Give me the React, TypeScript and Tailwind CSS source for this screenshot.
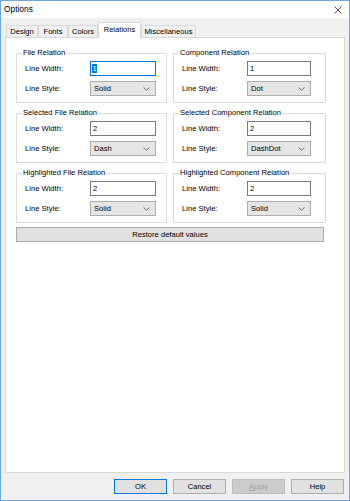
import React from "react";

const font = { fontFamily: '"Liberation Sans", Arial, sans-serif' };

function Chevron() {
  return (
    <svg width="7" height="4" viewBox="0 0 7 4" className="mr-[5px]">
      <path d="M0.5 0.5 L3.5 3.3 L6.5 0.5" fill="none" stroke="#6b6b6b" strokeWidth="0.9" />
    </svg>
  );
}

function Group({
  title,
  width,
  inputW,
  lineWidth,
  style,
  focused,
}: {
  title: string;
  width: string;
  inputW: string;
  lineWidth: string;
  style: string;
  focused?: boolean;
}) {
  return (
    <div className={`relative ${width} h-[50px] border border-[#dcdcdc] pt-[7px] pl-[8px] flex flex-col gap-[5px]`}>
      <div className="absolute -top-[6px] left-[5px] bg-white px-[1px] leading-[10px] text-black">{title}</div>
      <div className="flex items-center h-[15px]">
        <div className="w-[65px] text-black">Line Width:</div>
        <div
          className={`${inputW} h-[15px] border ${
            focused ? "border-[#0078d7]" : "border-[#7a7a7a]"
          } bg-white flex items-center pl-[1px]`}
        >
          {focused ? (
            <span className="bg-[#0078d7] text-white leading-[9px] px-[0.5px]">{lineWidth}</span>
          ) : (
            <span className="text-black pl-[1px]">{lineWidth}</span>
          )}
        </div>
      </div>
      <div className="flex items-center h-[15px]">
        <div className="w-[65px] text-black">Line Style:</div>
        <div className={`${inputW} h-[15px] border border-[#adadad] bg-[#e5e5e5] flex items-center justify-between pl-[3px]`}>
          <span className="text-black">{style}</span>
          <Chevron />
        </div>
      </div>
    </div>
  );
}

export default function App() {
  const tabs = [
    { name: "Design", w: "w-[32px]" },
    { name: "Fonts", w: "w-[30px]" },
    { name: "Colors", w: "w-[30px]" },
    { name: "Relations", w: "w-[43px]", active: true },
    { name: "Miscellaneous", w: "w-[55px]" },
  ];
  return (
    <div
      style={font}
      className="w-[350px] h-[501px] border border-[#6fa6dd] bg-[#f0f0f0] flex flex-col text-[7.6px] leading-none text-black overflow-hidden"
    >
      <div className="h-[17px] bg-white flex items-center justify-between pl-[3px] pr-[7px]">
        <span className="text-[8.4px]">Options</span>
        <svg width="8" height="8" viewBox="0 0 8 8">
          <path d="M0.5 0.5 L7.5 7.5 M7.5 0.5 L0.5 7.5" stroke="#222" strokeWidth="0.8" />
        </svg>
      </div>

      <div className="mt-[4px] pl-[5px] flex items-end h-[15px] relative z-10">
        {tabs.map((t) =>
          t.active ? (
            <div
              key={t.name}
              className={`${t.w} h-[16px] -mb-px bg-white border-t border-l border-r border-[#d9d9d9] flex items-center justify-center pb-[2px]`}
            >
              {t.name}
            </div>
          ) : (
            <div
              key={t.name}
              className={`${t.w} h-[12px] bg-[#f0f0f0] border-t border-l border-r border-[#d9d9d9] flex items-center justify-center`}
            >
              {t.name}
            </div>
          )
        )}
      </div>

      <div className="mx-[4px] h-[436px] bg-white border border-[#d9d9d9] pl-[10px] pt-[15px] flex flex-col">
        <div className="flex gap-[6px]">
          <Group title="File Relation" width="w-[151px]" inputW="w-[66px]" lineWidth="1" style="Solid" focused />
          <Group title="Component Relation" width="w-[153px]" inputW="w-[64px]" lineWidth="1" style="Dot" />
        </div>
        <div className="flex gap-[6px] mt-[10px]">
          <Group title="Selected File Relation" width="w-[151px]" inputW="w-[66px]" lineWidth="2" style="Dash" />
          <Group title="Selected Component Relation" width="w-[153px]" inputW="w-[64px]" lineWidth="2" style="DashDot" />
        </div>
        <div className="flex gap-[6px] mt-[10px]">
          <Group title="Highlighted File Relation" width="w-[151px]" inputW="w-[66px]" lineWidth="2" style="Solid" />
          <Group title="Highlighted Component Relation" width="w-[153px]" inputW="w-[64px]" lineWidth="2" style="Solid" />
        </div>
        <div className="mt-[4px] w-[308px] h-[15px] border border-[#adadad] bg-[#e1e1e1] flex items-center justify-center">
          Restore default values
        </div>
      </div>

      <div className="mt-[6px] flex justify-end gap-[6px] pr-[5px]">
        <div className="w-[53px] h-[15px] border border-[#0078d7] bg-[#e1e1e1] flex items-center justify-center">OK</div>
        <div className="w-[53px] h-[15px] border border-[#adadad] bg-[#e1e1e1] flex items-center justify-center">Cancel</div>
        <div className="w-[53px] h-[15px] border border-[#bfbfbf] bg-[#cccccc] flex items-center justify-center text-[#a0a0a0]">
          <span>
            <span className="underline">A</span>pply
          </span>
        </div>
        <div className="w-[53px] h-[15px] border border-[#adadad] bg-[#e1e1e1] flex items-center justify-center">Help</div>
      </div>
    </div>
  );
}
